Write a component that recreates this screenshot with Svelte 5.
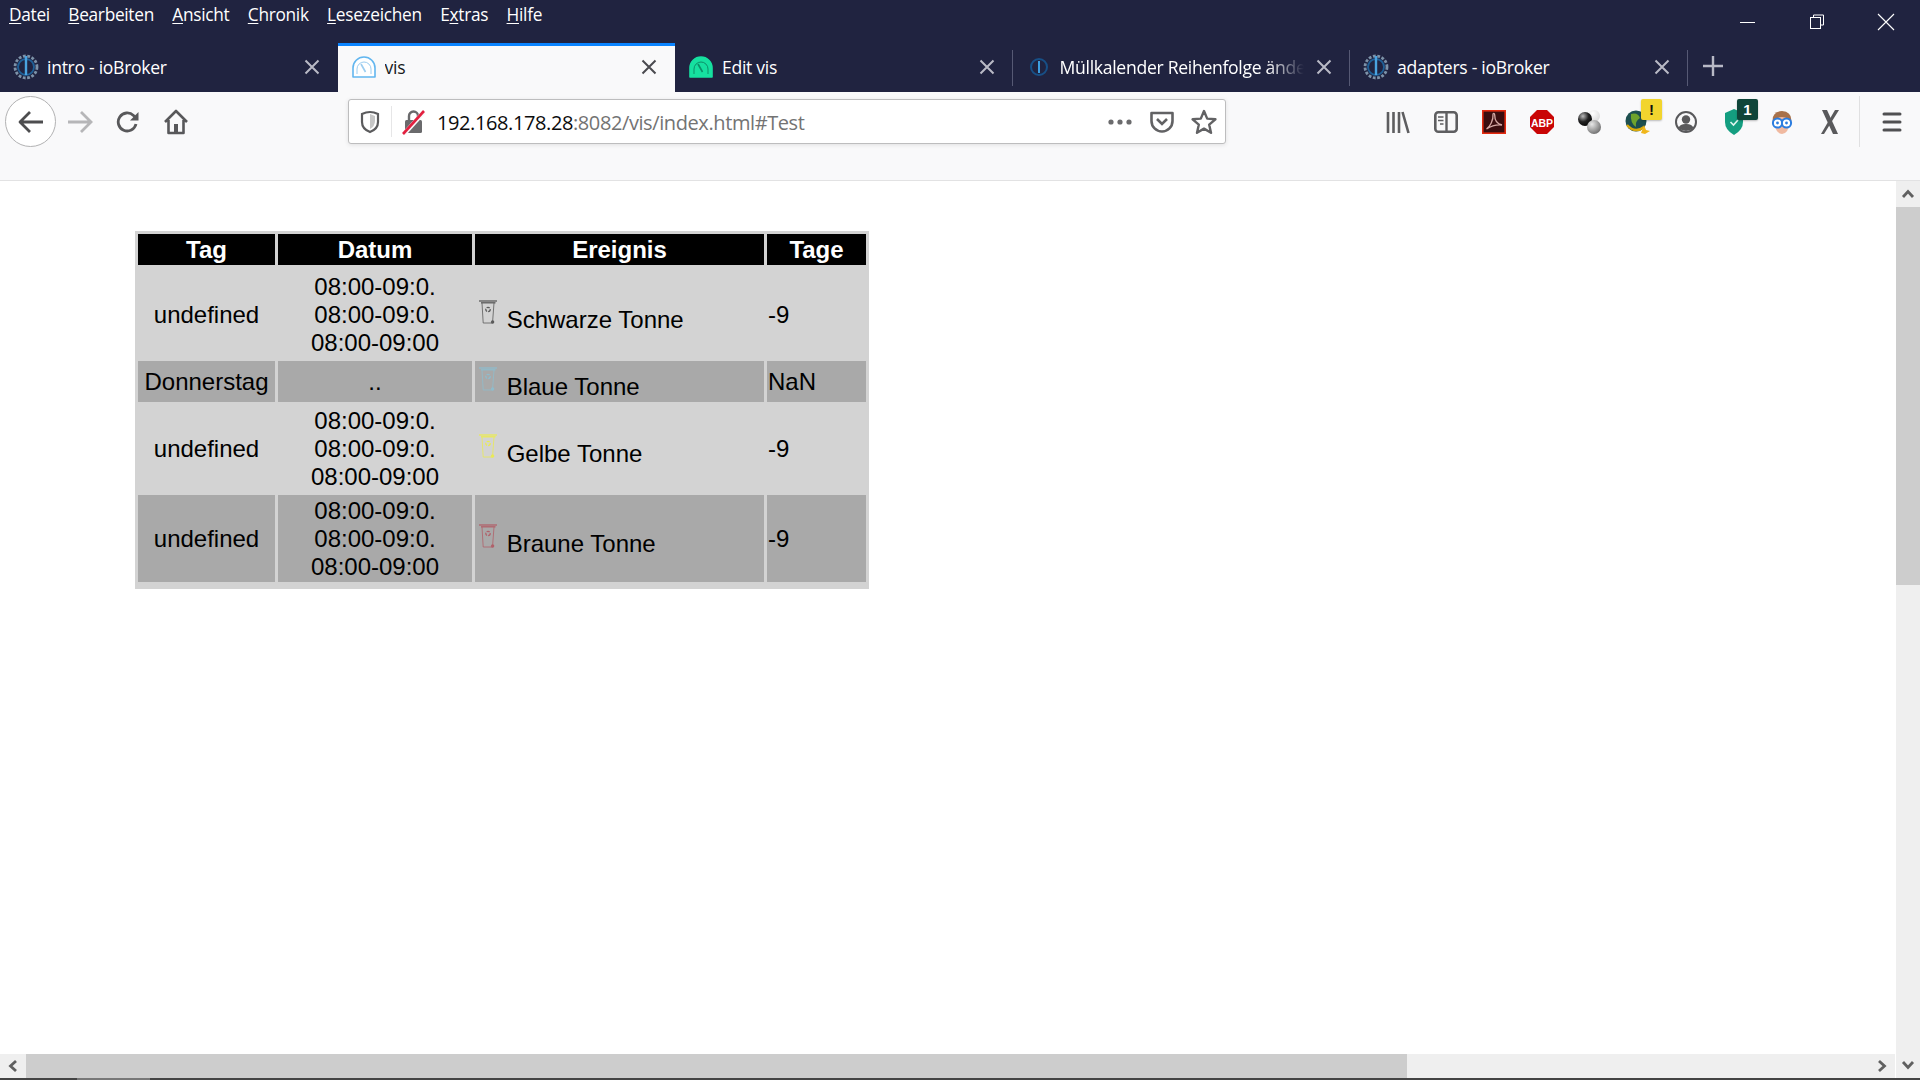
<script>
  const menu = [
    ['D', 'atei'], ['B', 'earbeiten'], ['A', 'nsicht'], ['C', 'hronik'], ['L', 'esezeichen'], ['E', 'xtras'], ['H', 'ilfe']
  ];
  const rows = [
    { tag: 'undefined', datum: ['08:00-09:0.', '08:00-09:0.', '08:00-09:00'], name: 'Schwarze Tonne', color: '#5a5a5a', tage: '-9' },
    { tag: 'Donnerstag', datum: ['..'], name: 'Blaue Tonne', color: '#8fbccc', tage: 'NaN', dark: true },
    { tag: 'undefined', datum: ['08:00-09:0.', '08:00-09:0.', '08:00-09:00'], name: 'Gelbe Tonne', color: '#eaea55', tage: '-9' },
    { tag: 'undefined', datum: ['08:00-09:0.', '08:00-09:0.', '08:00-09:00'], name: 'Braune Tonne', color: '#b0616a', tage: '-9', dark: true }
  ];
</script>

{#snippet gear()}
  <svg width="26" height="26" viewBox="0 0 26 26" fill="none">
    <circle cx="13" cy="13" r="11" stroke="#7d92a8" stroke-width="2.8" stroke-dasharray="2.8 1.6" />
    <circle cx="13" cy="13" r="8" stroke="#1f5f96" stroke-width="1.9" />
    <rect x="11.8" y="2" width="2.4" height="19" fill="#4aa3e0" />
  </svg>
{/snippet}

{#snippet gauge(fill, stroke, mark)}
  <svg width="26" height="24" viewBox="0 0 26 24" fill="none">
    <path d="M2 22 V13 A11 11 0 0 1 24 13 V22 Z" fill={fill} stroke={stroke} stroke-width="1.6" stroke-linejoin="round" />
    <path d="M6 19 V14 A7 7 0 0 1 20 14 V19" stroke={mark} stroke-width="1" />
    <path d="M10 9 L14.5 17" stroke={mark} stroke-width="1.6" />
  </svg>
{/snippet}

{#snippet closeIcon()}
  <svg width="16" height="16" viewBox="0 0 16 16"><path d="M1.5 1.5 L14.5 14.5 M14.5 1.5 L1.5 14.5" stroke="currentColor" stroke-width="2" /></svg>
{/snippet}

{#snippet bin(color)}
  <svg class="bin" width="24" height="32" viewBox="0 2 24 32" fill="none">
    <path d="M3 7 H21" stroke={color} stroke-width="1.3" />
    <path d="M5 8.8 H19.5" stroke={color} stroke-width="1.3" />
    <path d="M6 9 L7.2 29 H16.5 L18 9" stroke={color} stroke-width="0.8" />
    <circle cx="12" cy="15.5" r="2.2" stroke={color} stroke-width="1.3" stroke-dasharray="3 1" />
    <circle cx="16.6" cy="28" r="1.7" fill={color} />
  </svg>
{/snippet}

<div class="browser">
  <header class="titlebar">
    <div class="menurow">
      <nav class="menu">
        {#each menu as [key, rest], i}
          <span class="menu-item">
            {#if i === 5}E<u>x</u>tras{:else}<u>{key}</u>{rest}{/if}
          </span>
        {/each}
      </nav>
      <div class="winctl">
        <span class="winbtn"><svg width="16" height="16" viewBox="0 0 16 16"><path d="M0 8.5 H15" stroke="#fff" /></svg></span>
        <span class="winbtn"><svg width="16" height="16" viewBox="0 0 16 16" fill="none"><path d="M4.5 3.5 V1 H14.5 V11 H12" stroke="#fff" /><rect x="1.5" y="3.5" width="10" height="11" stroke="#fff" /></svg></span>
        <span class="winbtn"><svg width="18" height="18" viewBox="0 0 18 18"><path d="M1 1 L17 17 M17 1 L1 17" stroke="#fff" stroke-width="1.1" /></svg></span>
      </div>
    </div>
    <div class="tabs">
      <div class="tab">
        <span class="favicon">{@render gear()}</span>
        <span class="tab-title">intro - ioBroker</span>
        <span class="tab-close">{@render closeIcon()}</span>
      </div>
      <div class="tab active">
        <span class="favicon">{@render gauge('#fff', '#62b6ef', '#9ccdf0')}</span>
        <span class="tab-title">vis</span>
        <span class="tab-close">{@render closeIcon()}</span>
      </div>
      <div class="tab sep">
        <span class="favicon">{@render gauge('#16e0a0', '#16e0a0', '#0b8f68')}</span>
        <span class="tab-title">Edit vis</span>
        <span class="tab-close">{@render closeIcon()}</span>
      </div>
      <div class="tab sep">
        <span class="favicon">
          <svg width="24" height="24" viewBox="0 0 24 24" fill="none">
            <circle cx="12" cy="12" r="8" stroke="#174f86" stroke-width="2" />
            <rect x="11" y="6" width="2" height="12" fill="#3c9ee0" />
          </svg>
        </span>
        <span class="tab-title fade">Müllkalender Reihenfolge ändern</span>
        <span class="tab-close">{@render closeIcon()}</span>
      </div>
      <div class="tab sep">
        <span class="favicon">{@render gear()}</span>
        <span class="tab-title">adapters - ioBroker</span>
        <span class="tab-close">{@render closeIcon()}</span>
      </div>
      <span class="newtab">
        <svg width="22" height="22" viewBox="0 0 22 22"><path d="M11 1 V21 M1 11 H21" stroke="#b8b9c6" stroke-width="2.4" /></svg>
      </span>
    </div>
  </header>

  <div class="toolbar">
    <div class="navbar">
      <button class="back" aria-label="Zurück">
        <svg width="26" height="24" viewBox="0 0 26 24" fill="none"><path d="M12 2 L2 12 L12 22 M2 12 H25" stroke="#4d4d4f" stroke-width="2.8" stroke-linejoin="round" /></svg>
      </button>
      <span class="slot nav">
        <svg width="26" height="24" viewBox="0 0 26 24" fill="none"><path d="M14 2 L24 12 L14 22 M24 12 H1" stroke="#b6b6b8" stroke-width="2.8" /></svg>
      </span>
      <span class="slot nav">
        <svg width="24" height="24" viewBox="0 0 24 24" fill="none"><path d="M20 14 A9 9 0 1 1 17.5 5.5 L21 9" stroke="#58585a" stroke-width="2.8" /><path d="M22.5 2 V10.5 H14 Z" fill="#58585a" /></svg>
      </span>
      <span class="slot nav">
        <svg width="26" height="26" viewBox="0 0 26 26" fill="none"><path d="M2 13 L13 2 L24 13 M5.5 11 V24 H20.5 V11" stroke="#58585a" stroke-width="2.6" stroke-linejoin="round" /><rect x="11" y="15" width="4" height="9" fill="#58585a" /></svg>
      </span>

      <div class="urlbar">
        <span class="url-shield">
          <svg width="20" height="24" viewBox="0 0 20 24" fill="none"><path d="M2 4 Q10 0 18 4 V12 Q18 19 10 22 Q2 19 2 12 Z" stroke="#5b5b5d" stroke-width="2.2" /><path d="M10 4 V19 Q15 16 15 11 V6 Z" fill="#5b5b5d" opacity="0.35" /></svg>
        </span>
        <span class="url-lock">
          <svg width="24" height="26" viewBox="0 0 24 26" fill="none">
            <rect x="3" y="11" width="17" height="13" rx="1.5" fill="#6a6a6c" />
            <path d="M7 11 V7 A4.5 4.5 0 0 1 16 7 V11" stroke="#6a6a6c" stroke-width="2.4" />
            <path d="M2 25 L22 3" stroke="#f9f9fa" stroke-width="4.5" />
            <path d="M1 25 L22 2" stroke="#e2203f" stroke-width="2.6" />
          </svg>
        </span>
        <span class="url-text">192.168.178.28<span class="url-rest">:8082/vis/index.html#Test</span></span>
        <span class="url-action"><svg width="26" height="6" viewBox="0 0 26 6"><circle cx="4" cy="3" r="2.6" fill="#6b6b6d" /><circle cx="13" cy="3" r="2.6" fill="#6b6b6d" /><circle cx="22" cy="3" r="2.6" fill="#6b6b6d" /></svg></span>
        <span class="url-action"><svg width="24" height="24" viewBox="0 0 24 24" fill="none"><path d="M1.5 3 H22.5 V11 A10.5 10.5 0 0 1 1.5 11 Z" stroke="#626264" stroke-width="2.6" stroke-linejoin="round" /><path d="M7 9 L12 14 L17 9" stroke="#626264" stroke-width="2.6" /></svg></span>
        <span class="url-action"><svg width="26" height="26" viewBox="0 0 26 26" fill="none"><path d="M13 2 L16.2 9.6 L24.4 10.3 L18.2 15.7 L20 23.8 L13 19.6 L6 23.8 L7.8 15.7 L1.6 10.3 L9.8 9.6 Z" stroke="#626264" stroke-width="2.4" stroke-linejoin="round" /></svg></span>
      </div>

      <div class="addons">
        <span class="slot">
          <svg width="24" height="24" viewBox="0 0 24 24" fill="none" stroke="#5e5e60" stroke-width="2.6"><path d="M2 2 V23 M7.5 2 V23 M13 2 V23 M16.5 2 L22.5 23" /></svg>
        </span>
        <span class="slot">
          <svg width="24" height="24" viewBox="0 0 24 24" fill="none"><rect x="1.3" y="2.3" width="21.4" height="19.4" rx="3" stroke="#5e5e60" stroke-width="2.6" /><path d="M12.5 2 V22" stroke="#5e5e60" stroke-width="2.4" /><path d="M4 7 H9.5 M4 10.5 H9.5 M6 14 H9.5" stroke="#5e5e60" stroke-width="1.5" /></svg>
        </span>
        <span class="slot">
          <svg width="24" height="24" viewBox="0 0 24 24" fill="none"><rect x="0.8" y="0.8" width="22.4" height="22.4" fill="#3a0d0f" stroke="#e42a10" stroke-width="1.6" /><path d="M4.5 19 C8 17 11.5 10 11 4.5 C11 3 12.7 3 12.7 5 C12.7 10 15 14 20 15 C15 14.5 9 16 4.5 19 Z" stroke="#d5a8a4" stroke-width="1.3" /></svg>
        </span>
        <span class="slot">
          <svg width="24" height="24" viewBox="0 0 24 24"><path d="M7 0 H17 L24 7 V17 L17 24 H7 L0 17 V7 Z" fill="#c90505" /><text x="12" y="16.5" text-anchor="middle" class="abp">ABP</text></svg>
        </span>
        <span class="slot">
          <svg width="26" height="26" viewBox="0 0 26 26">
            <defs>
              <radialGradient id="ballDark" cx="0.35" cy="0.3" r="0.8"><stop offset="0" stop-color="#bbb" /><stop offset="0.5" stop-color="#222" /><stop offset="1" stop-color="#000" /></radialGradient>
              <radialGradient id="ballGray" cx="0.35" cy="0.3" r="0.8"><stop offset="0" stop-color="#e8e8e8" /><stop offset="1" stop-color="#666" /></radialGradient>
              <radialGradient id="ballLight" cx="0.4" cy="0.3" r="0.8"><stop offset="0" stop-color="#fff" /><stop offset="1" stop-color="#d5d5d5" /></radialGradient>
            </defs>
            <circle cx="17" cy="7" r="6" fill="url(#ballLight)" />
            <circle cx="8" cy="10" r="7" fill="url(#ballDark)" />
            <circle cx="17" cy="18" r="7" fill="url(#ballGray)" />
          </svg>
        </span>
        <span class="slot icon-badged">
          <svg width="26" height="26" viewBox="0 0 26 26">
            <circle cx="11" cy="12" r="10.5" fill="#1d4f4f" />
            <path d="M6 5 Q13 3 15 9 Q10 12 11 18 Q5 14 6 5 Z" fill="#6fa32c" />
            <path d="M2 16 Q10 25 19 18" fill="none" stroke="#d9a90c" stroke-width="2.4" />
            <path d="M19 16 L21 21 L25 22 L20 25 L16 24 Z" fill="#f0b61a" />
          </svg>
          <span class="badge warn">!</span>
        </span>
        <span class="slot">
          <svg width="24" height="24" viewBox="0 0 24 24" fill="none"><circle cx="12" cy="12" r="10" stroke="#59595b" stroke-width="2" /><circle cx="12" cy="9.5" r="4.2" fill="#59595b" /><path d="M4.5 18 Q6 13.8 12 14 Q18 13.8 19.5 18 Q16 21 12 21 Q8 21 4.5 18 Z" fill="#59595b" /></svg>
        </span>
        <span class="slot icon-badged">
          <svg width="20" height="26" viewBox="0 0 20 26"><path d="M10 0 L19 4 V13 Q19 21 10 26 Q1 21 1 13 V4 Z" fill="#149e80" /><path d="M6.5 13 L9.5 16 L14 11" fill="none" stroke="#dff5ef" stroke-width="1.6" /></svg>
          <span class="badge count">1</span>
        </span>
        <span class="slot">
          <svg width="24" height="26" viewBox="0 0 24 26">
            <path d="M3 14 Q1 3 12 2 Q23 3 21 14 Z" fill="#a8714a" />
            <path d="M5 14 Q5 24 12 25 Q19 24 19 14 Q19 8 12 8 Q5 8 5 14 Z" fill="#f0b9a0" />
            <circle cx="7.5" cy="14" r="4.6" fill="#fff" stroke="#2b7de0" stroke-width="2" />
            <circle cx="16.5" cy="14" r="4.6" fill="#fff" stroke="#2b7de0" stroke-width="2" />
            <circle cx="7.5" cy="14" r="1.4" fill="#2b7de0" />
            <circle cx="16.5" cy="14" r="1.4" fill="#2b7de0" />
          </svg>
        </span>
        <span class="slot">
          <svg width="22" height="26" viewBox="0 0 22 26"><path d="M3 1 L8 1 L19 25 L14 25 Z" fill="#59595b" /><path d="M20 1 L16 1 L2 25 L5 25 Z" fill="#59595b" /></svg>
        </span>
      </div>
      <span class="toolbar-sep"></span>
      <span class="slot hamburger">
        <svg width="20" height="22" viewBox="0 0 20 22"><path d="M2 3 H18 M2 11 H18 M2 19 H18" stroke="#505052" stroke-width="3" stroke-linecap="round" /></svg>
      </span>
    </div>
  </div>

  <div class="content">
    <div class="pane">
      <main class="viewport">
        <div class="widget">
          <table>
            <colgroup>
              <col style="width:137px" />
              <col style="width:194px" />
              <col style="width:289px" />
              <col style="width:99px" />
            </colgroup>
            <thead>
              <tr><th>Tag</th><th>Datum</th><th>Ereignis</th><th>Tage</th></tr>
            </thead>
            <tbody>
              {#each rows as row}
                <tr class:dark={row.dark}>
                  <td class="center">{row.tag}</td>
                  <td class="center">
                    {#each row.datum as line}<div>{line}</div>{/each}
                  </td>
                  <td class="event">{@render bin(row.color)} {row.name}</td>
                  <td>{row.tage}</td>
                </tr>
              {/each}
            </tbody>
          </table>
        </div>
      </main>
      <div class="hscroll">
        <span class="arrow">
          <svg width="12" height="14" viewBox="0 0 12 14"><path d="M9 2 L3.5 7 L9 12" fill="none" stroke="#606060" stroke-width="2.8" /></svg>
        </span>
        <span class="hthumb"></span>
        <span class="htrack"></span>
        <span class="arrow">
          <svg width="12" height="14" viewBox="0 0 12 14"><path d="M3 2 L8.5 7 L3 12" fill="none" stroke="#606060" stroke-width="2.8" /></svg>
        </span>
      </div>
    </div>
    <div class="vscroll">
      <span class="arrow v">
        <svg width="14" height="12" viewBox="0 0 14 12"><path d="M2 9 L7 3.5 L12 9" fill="none" stroke="#606060" stroke-width="2.8" /></svg>
      </span>
      <span class="vthumb"></span>
      <span class="vtrack"></span>
      <span class="arrow v">
        <svg width="14" height="12" viewBox="0 0 14 12"><path d="M2 3 L7 8.5 L12 3" fill="none" stroke="#606060" stroke-width="2.8" /></svg>
      </span>
    </div>
  </div>
  <div class="taskbar"><span class="task-active"></span></div>
</div>

<style>
  :global(body) {
    margin: 0;
    background: #fff;
  }

  .browser {
    display: flex;
    flex-direction: column;
    width: 1920px;
    height: 1080px;
    overflow: hidden;
    font-family: "Open Sans", "Noto Sans", sans-serif;
  }

  .titlebar {
    flex: 0 0 auto;
    background: #202340;
    color: #fff;
  }

  .menurow {
    display: flex;
    justify-content: space-between;
    height: 43px;
  }

  .menu {
    display: flex;
    padding-left: 9px;
    font-size: 17.3px;
    letter-spacing: -0.3px;
    line-height: 30px;
  }

  .menu-item {
    margin-right: 18.4px;
    white-space: nowrap;
  }

  .menu u {
    text-underline-offset: 2px;
    text-decoration-thickness: 1px;
  }

  .winctl {
    display: flex;
  }

  .winbtn {
    display: flex;
    align-items: center;
    justify-content: center;
    width: 69px;
  }

  .tabs {
    display: flex;
    height: 49px;
  }

  .tab {
    position: relative;
    box-sizing: border-box;
    flex: 0 0 337.5px;
    min-width: 0;
    display: flex;
    align-items: center;
    padding: 0 18px 2px 13px;
    color: #fff;
    font-size: 17.6px;
    letter-spacing: -0.3px;
  }

  .tab.sep::after {
    content: "";
    position: absolute;
    right: 0;
    top: 7px;
    bottom: 6px;
    width: 1px;
    background: #565974;
  }

  .tab.active {
    background: #f9f9fa;
    color: #18191a;
    border-top: 3px solid #0a84ff;
    padding-bottom: 5px;
  }

  .favicon {
    flex: 0 0 26px;
    display: flex;
    align-items: center;
    justify-content: center;
    margin-right: 8px;
  }

  .tab-title {
    flex: 1 1 0;
    min-width: 0;
    overflow: hidden;
    white-space: nowrap;
  }

  .tab-title.fade {
    -webkit-mask-image: linear-gradient(to right, #000 85%, transparent);
    mask-image: linear-gradient(to right, #000 85%, transparent);
  }

  .tab-close {
    flex: 0 0 16px;
    display: flex;
    margin-left: 12px;
    color: #b9bac6;
  }

  .tab.active .tab-close {
    color: #4a4a4f;
  }

  .newtab {
    display: flex;
    align-items: center;
    margin-left: 14px;
    margin-top: -4px;
  }

  .toolbar {
    flex: 0 0 auto;
    box-sizing: border-box;
    height: 89px;
    padding-top: 4px;
    background: #f9f9fa;
    border-bottom: 1px solid #e2e2e3;
  }

  .navbar {
    display: flex;
    align-items: center;
    height: 51px;
  }

  .back {
    box-sizing: border-box;
    display: flex;
    align-items: center;
    justify-content: center;
    width: 51px;
    height: 51px;
    margin-left: 5px;
    padding: 0;
    border: 1px solid #b2b2b3;
    border-radius: 50%;
    background: #fff;
  }

  .slot {
    position: relative;
    flex: 0 0 48px;
    display: flex;
    align-items: center;
    justify-content: center;
  }

  .urlbar {
    box-sizing: border-box;
    flex: 0 0 878px;
    display: flex;
    align-items: center;
    height: 45px;
    margin-left: 148px;
    background: #fff;
    border: 1px solid #bdbdbe;
    border-radius: 3px;
    box-shadow: 0 1px 4px rgba(0, 0, 0, 0.1);
  }

  .url-shield {
    flex: 0 0 42px;
    display: flex;
    align-items: center;
    justify-content: center;
    height: 31px;
    border-right: 1px solid #e6e6e7;
  }

  .url-lock {
    flex: 0 0 43px;
    display: flex;
    align-items: center;
    justify-content: center;
  }

  .url-text {
    flex: 1 1 auto;
    padding: 1px 0 0 2px;
    color: #0c0c0d;
    font-size: 20px;
    letter-spacing: -0.4px;
    white-space: nowrap;
  }

  .url-rest {
    color: #737373;
  }

  .url-action {
    flex: 0 0 42px;
    display: flex;
    align-items: center;
    justify-content: center;
  }

  .addons {
    display: flex;
    margin-left: 148px;
  }

  .abp {
    fill: #fff;
    font-family: "Liberation Sans", sans-serif;
    font-size: 10.5px;
    font-weight: 700;
  }

  .badge {
    position: absolute;
    top: -10px;
    left: 27px;
    box-sizing: border-box;
    width: 21px;
    height: 21px;
    border-radius: 2px;
    box-shadow: 0 1px 2px rgba(0, 0, 0, 0.25);
    font-family: "Liberation Sans", sans-serif;
    font-size: 15px;
    font-weight: 700;
    line-height: 21px;
    text-align: center;
  }

  .badge.warn {
    background: #f2d52e;
    color: #111;
  }

  .badge.count {
    left: 27px;
    background: #0f4539;
    color: #fff;
  }

  .toolbar-sep {
    flex: 0 0 1px;
    height: 51px;
    margin-left: 5px;
    background: #e0e0e1;
  }

  .hamburger {
    margin-left: 8px;
  }

  .content {
    flex: 1 1 auto;
    display: flex;
    min-height: 0;
  }

  .pane {
    flex: 1 1 auto;
    display: flex;
    flex-direction: column;
    min-width: 0;
  }

  .viewport {
    flex: 1 1 auto;
    padding: 50px 0 0 135px;
    color: #000;
    font-family: "Liberation Sans", Arial, sans-serif;
    font-size: 24px;
  }

  .widget {
    box-sizing: border-box;
    width: 734px;
    padding-bottom: 4px;
    background: #d3d3d3;
  }

  table {
    width: 734px;
    table-layout: fixed;
    border-collapse: separate;
    border-spacing: 3px;
    margin-bottom: 0;
  }

  th {
    height: 31px;
    padding: 0;
    background: #000;
    color: #fff;
    font-weight: 700;
    line-height: 31px;
  }

  td {
    padding: 2px 1px 1px;
    line-height: 28px;
    white-space: nowrap;
  }

  tbody tr:first-child td {
    padding: 5px 1px 0.5px;
  }

  tr.dark td {
    background: #a9a9a9;
  }

  .center {
    text-align: center;
  }

  .event {
    vertical-align: middle;
  }

  .bin {
    vertical-align: baseline;
  }

  .hscroll {
    flex: 0 0 24px;
    display: flex;
    background: #efefef;
  }

  .arrow {
    flex: 0 0 26px;
    display: flex;
    align-items: center;
    justify-content: center;
  }

  .hthumb {
    flex: 0 0 1381px;
    background: #cdcdcd;
  }

  .htrack {
    flex: 1 1 auto;
  }

  .vscroll {
    flex: 0 0 24px;
    display: flex;
    flex-direction: column;
    margin-left: 1px;
    background: #efefef;
  }

  .arrow.v {
    flex: 0 0 26px;
  }

  .vthumb {
    flex: 0 0 378px;
    background: #cdcdcd;
  }

  .vtrack {
    flex: 1 1 auto;
  }

  .taskbar {
    flex: 0 0 2px;
    background: #444;
  }

  .task-active {
    display: block;
    width: 73px;
    height: 2px;
    margin-left: 77px;
    background: #777;
  }
</style>
